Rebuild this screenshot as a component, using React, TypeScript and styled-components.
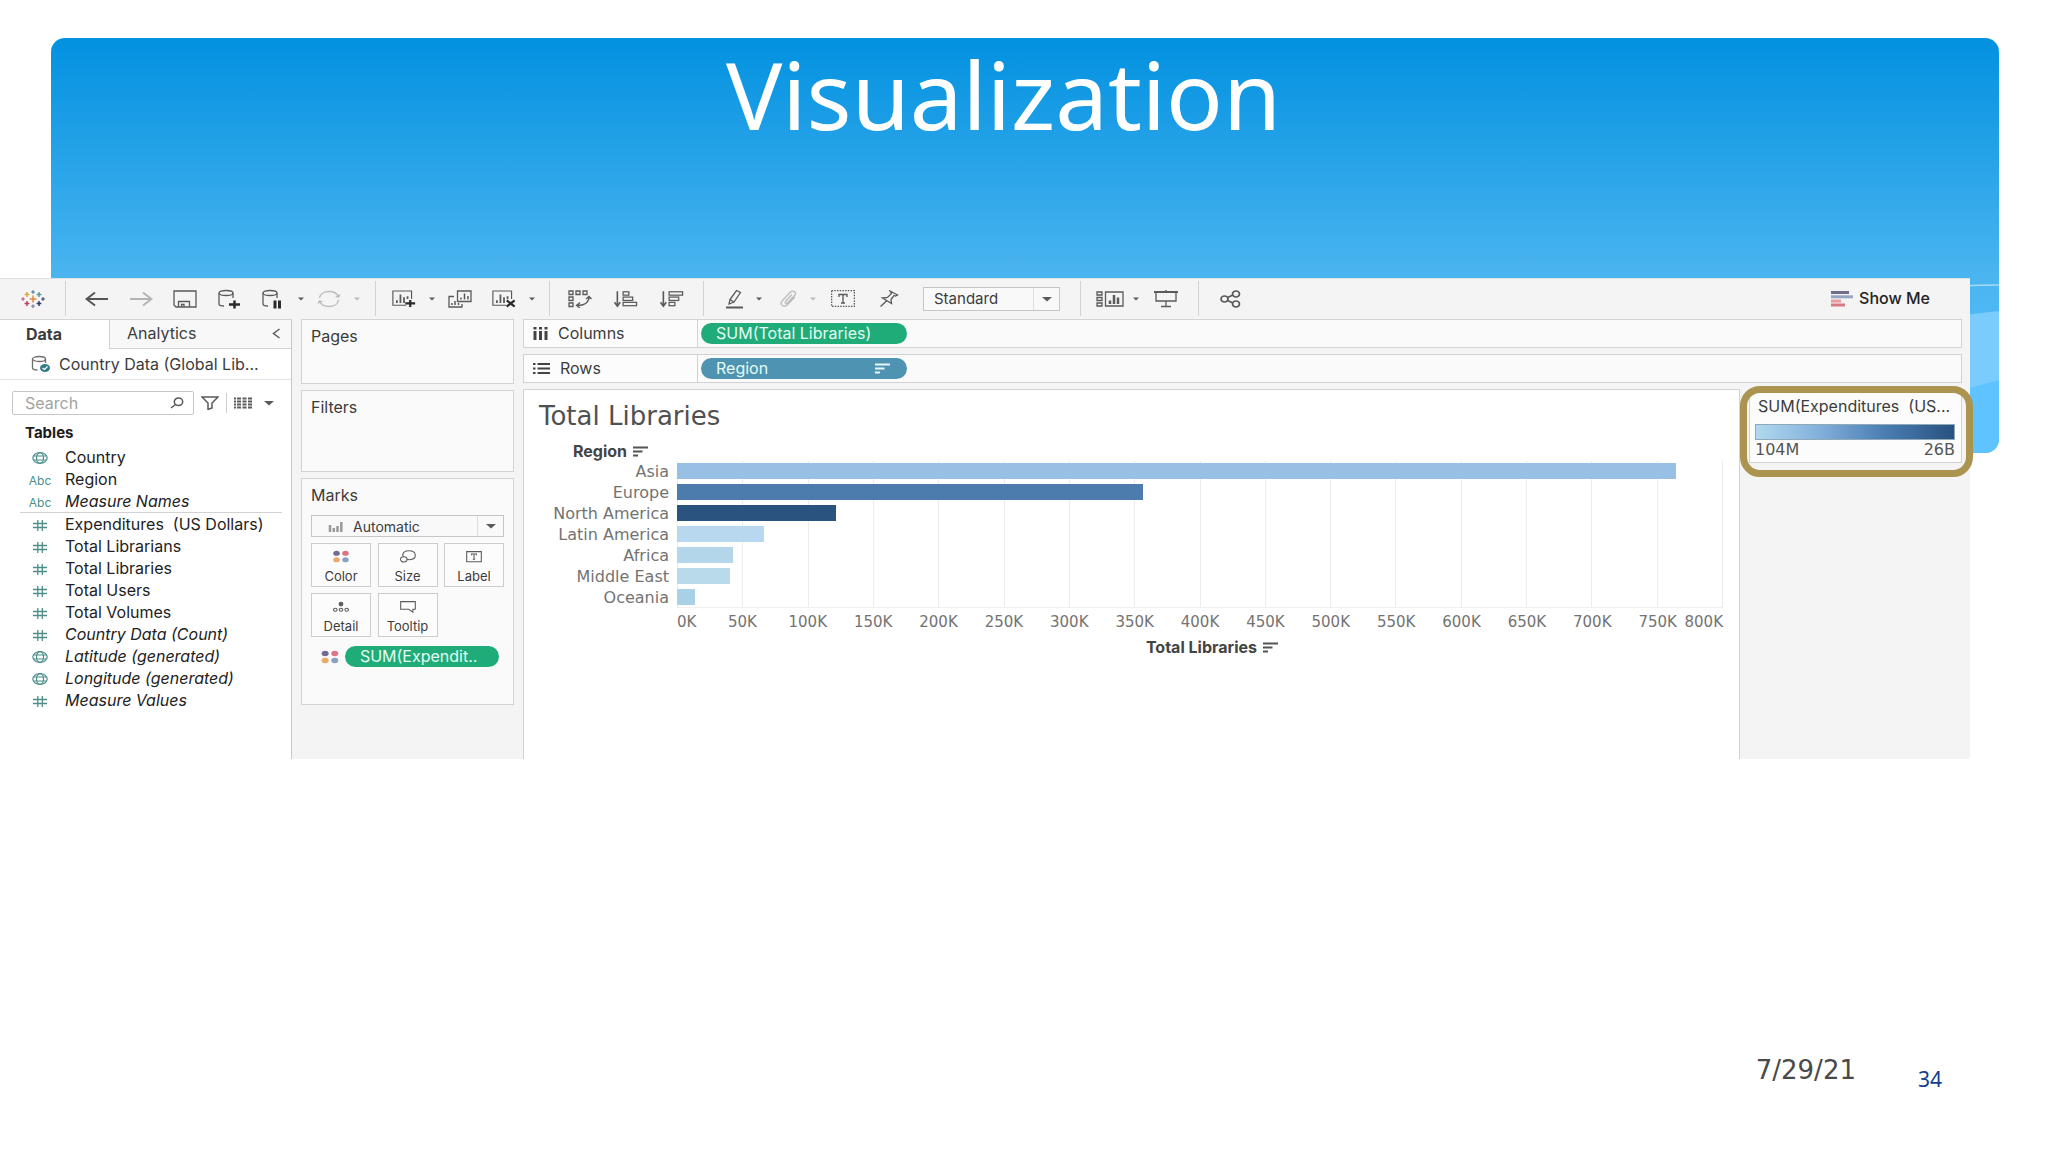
import React from "react";
import styled, { createGlobalStyle } from "styled-components";

const line = "#d2d2d2";
const ink = "#3c3c3c";
const green = "#1fac79";
const teal = "#4b8f8a";

const GlobalStyle = createGlobalStyle`
  *, *::before, *::after { box-sizing: border-box; }
  body { margin: 0; background: #fff; }
  button, input, select { font: inherit; color: inherit; margin: 0; }
`;

const Slide = styled.div`
  min-height: 100vh;
  display: flex;
  flex-direction: column;
  font-family: Inter, "Liberation Sans", sans-serif;
  font-size: 16px;
  color: ${ink};
`;

const Banner = styled.header`
  display: grid;
  margin: 38px 49px 0 51px;
  height: 415px;
  border-radius: 14px;
  background: linear-gradient(#0291e0 0%, #4bb5f0 58%, #50bafa 72%, #5ec3ff 100%);
`;

const Waves = styled.svg`
  grid-area: 1 / 1;
  align-self: end;
  justify-self: end;
  width: 80px;
  height: 175px;
  border-radius: 0 0 14px 0;
`;

const SlideTitle = styled.h1`
  grid-area: 1 / 1;
  margin: 0;
  padding-right: 43px;
  text-align: center;
  font: 400 94px/112px "Noto Sans", "Open Sans", sans-serif;
  color: #fff;
`;

const Workbook = styled.main`
  position: relative;
  margin: -175px 78px 0 0;
  background: #f4f4f4;
`;

const Toolbar = styled.div`
  display: flex;
  height: 41px;
  border-top: 1px solid #dcdfe2;
`;

const ToolGroup = styled.div<{ $left: number; $right: number; $gap?: number }>`
  display: flex;
  align-items: center;
  gap: ${(p) => p.$gap ?? 22}px;
  padding: 0 ${(p) => p.$right}px 0 ${(p) => p.$left}px;
  margin: 2px 0 3px;
  border-right: 1px solid ${line};
  &:last-of-type { border-right: 0; }
`;

const IconButton = styled.button<{ $w?: number }>`
  display: flex;
  align-items: center;
  justify-content: center;
  width: ${(p) => p.$w ?? 24}px;
  height: 24px;
  padding: 0;
  border: 0;
  background: none;
`;

const Split = styled.div<{ $gap?: number }>`
  display: flex;
  align-items: center;
  gap: ${(p) => p.$gap ?? 10}px;
  margin-right: -10px;
`;

const ShowMe = styled.button`
  display: flex;
  align-items: center;
  gap: 5px;
  margin-left: auto;
  padding: 0 40px 2px 0;
  border: 0;
  background: none;
  color: #222;
  font-weight: 500;
`;

const SelectBox = styled.div<{ $w: string; $h: number }>`
  display: grid;
  grid-template-columns: 1fr 25px;
  width: ${(p) => p.$w};
  height: ${(p) => p.$h}px;
  border: 1px solid #c6c6c6;
  background: #f9f9f9;
  & > svg { grid-area: 1 / 2; place-self: center; pointer-events: none; }
`;

const Select = styled.select<{ $pad: number; $size: number }>`
  grid-area: 1 / 1 / 2 / 3;
  min-width: 0;
  appearance: none;
  border: 0;
  padding: 0 26px 0 ${(p) => p.$pad}px;
  font-size: ${(p) => p.$size}px;
  background: linear-gradient(#dedede, #dedede) right 25px top / 1px 100% no-repeat;
`;

const SelectIcon = styled.span`
  grid-area: 1 / 1;
  align-self: center;
  display: flex;
  padding-left: 16px;
  pointer-events: none;
`;

const Body = styled.div`
  display: grid;
  grid-template-columns: 292px 213px minmax(0, 1fr);
  column-gap: 9px;
  min-height: 440px;
`;

const DataPane = styled.aside`
  border-right: 1px solid #c8c8c8;
  border-top: 1px solid ${line};
  background: #fff;
`;

const TabBar = styled.div`
  display: flex;
  height: 29px;
`;

const Tab = styled.button<{ $active?: boolean }>`
  width: ${(p) => (p.$active ? "109px" : "auto")};
  flex: ${(p) => (p.$active ? "none" : 1)};
  display: flex;
  align-items: center;
  justify-content: space-between;
  padding: 0 10px 2px ${(p) => (p.$active ? 26 : 17)}px;
  border: 0;
  border-left: ${(p) => (p.$active ? "0" : `1px solid ${line}`)};
  border-bottom: ${(p) => (p.$active ? "0" : `1px solid ${line}`)};
  background: ${(p) => (p.$active ? "#fff" : "#f8f8f8")};
  font-weight: ${(p) => (p.$active ? 700 : 400)};
`;

const DataSource = styled.div`
  display: flex;
  align-items: center;
  gap: 8px;
  height: 31px;
  padding: 0 10px 1px 31px;
  border-bottom: 1px solid #e6e6e6;
  white-space: nowrap;
`;

const SearchRow = styled.div`
  display: flex;
  align-items: center;
  padding: 11px 0 0 12px;
`;

const SearchBox = styled.label`
  display: flex;
  align-items: center;
  width: 182px;
  height: 24px;
  padding: 0 9px 0 12px;
  margin-right: 6px;
  border: 1px solid #c6c6c6;
  border-radius: 2px;
`;

const SearchInput = styled.input`
  flex: 1;
  min-width: 0;
  padding: 0;
  border: 0;
  outline: 0;
  background: none;
  font-size: 16px;
  &::placeholder { color: #a2a2a2; opacity: 1; }
`;

const Divider = styled.span`
  width: 1px;
  height: 20px;
  margin: 0 6px 0 7px;
  background: #cfcfcf;
`;

const TablesHeading = styled.h2`
  margin: 7px 0 2px 25px;
  font-size: 15px;
  line-height: 22px;
  font-weight: 700;
  color: #1c1c1c;
`;

const FieldList = styled.ul`
  list-style: none;
  margin: 0 9px 0 20px;
  padding: 0;
  & + & { border-top: 1px solid ${line}; }
`;

const Field = styled.li<{ $italic?: boolean }>`
  display: grid;
  grid-template-columns: 40px 1fr;
  align-items: center;
  height: 22px;
  padding-left: 5px;
  font-style: ${(p) => (p.$italic ? "italic" : "normal")};
  color: #222;
  white-space: pre;
`;

const FieldIcon = styled.span`
  display: flex;
  justify-content: center;
  width: 30px;
  padding-top: 2px;
  font-size: 12px;
  font-style: normal;
  color: ${teal};
`;

const Cards = styled.div`
  display: flex;
  flex-direction: column;
`;

const Card = styled.section<{ $h: number }>`
  height: ${(p) => p.$h}px;
  margin-bottom: 6px;
  padding: 3px 9px 0 9px;
  border: 1px solid ${line};
  background: #fafafa;
`;

const CardTitle = styled.h2`
  margin: 0;
  font-size: 16px;
  line-height: 26px;
  font-weight: 400;
`;

const MarkTypeRow = styled.div`
  margin-top: 7px;
`;

const MarkGrid = styled.div`
  display: grid;
  grid-template-columns: repeat(3, 60px);
  justify-content: space-between;
  gap: 6px;
  margin: 6px 0 9px;
`;

const MarkButton = styled.button`
  display: flex;
  flex-direction: column;
  align-items: center;
  gap: 3px;
  height: 44px;
  padding: 6px 0 0;
  border: 1px solid #cdcdcd;
  background: #fcfcfc;
  font-size: 13px;
  line-height: 20px;
`;

const MarkPill = styled.div`
  display: flex;
  align-items: center;
  gap: 6px;
  padding: 0 5px 0 10px;
`;

const Pill = styled.button<{ $color?: string; $w?: string }>`
  display: flex;
  align-items: center;
  justify-content: space-between;
  width: ${(p) => p.$w ?? "206px"};
  height: 21px;
  padding: 0 17px 0 15px;
  border: 0;
  border-radius: 11px;
  background: ${(p) => p.$color ?? green};
  color: #e4fbf3;
  line-height: 21px;
  white-space: nowrap;
`;

const Sheet = styled.div`
  display: flex;
  flex-direction: column;
  min-width: 0;
`;

const Shelf = styled.div`
  display: grid;
  grid-template-columns: 174px 1fr;
  height: 29px;
  margin: 0 8px 6px 0;
  border: 1px solid ${line};
  background: #fafafa;
`;

const ShelfName = styled.div`
  display: flex;
  align-items: center;
  gap: 10px;
  padding: 0 0 1px 9px;
  border-right: 1px solid ${line};
  background: #fcfcfc;
`;

const ShelfDrop = styled.div`
  padding: 3px;
`;

const ViewRow = styled.div`
  flex: 1;
  display: grid;
  grid-template-columns: minmax(0, 1fr) 230px;
`;

const View = styled.section`
  border: 1px solid ${line};
  border-bottom: 0;
  background: #fff;
  padding: 8px 16px 0 15px;
`;

const ViewTitle = styled.h2`
  margin: 0;
  font: 400 26px/36px "DejaVu Sans", "Liberation Sans", sans-serif;
  color: #505050;
`;

const Chart = styled.figure`
  display: grid;
  grid-template-columns: 138px minmax(0, 1fr);
  margin: 7px 0 0;
  font: 400 15px/21px "DejaVu Sans", "Liberation Sans", sans-serif;
  color: #737373;
`;

const ChartHeading = styled.div<{ $axis?: boolean }>`
  display: flex;
  align-items: center;
  gap: 6px;
  grid-column: ${(p) => (p.$axis ? "2" : "1 / -1")};
  justify-content: ${(p) => (p.$axis ? "center" : "flex-start")};
  padding-left: ${(p) => (p.$axis ? 24 : 34)}px;
  height: 20px;
  font: 700 16px/20px Inter, "Liberation Sans", sans-serif;
  color: #444;
`;

const Labels = styled.div`
  padding: 0 8px 0 0;
  text-align: right;
  white-space: nowrap;
  font-size: 16px;
`;

const Plot = styled.div`
  display: grid;
  height: 147px;
`;

const Gridlines = styled.div`
  grid-area: 1 / 1;
  display: flex;
  justify-content: space-between;
  border-bottom: 1px solid #f0f0f0;
  & > i { width: 1px; background: #ececec; }
`;

const Bars = styled.div`
  grid-area: 1 / 1;
  display: flex;
  flex-direction: column;
  gap: 5px;
  padding-top: 2px;
`;

const Bar = styled.div<{ $color: string }>`
  height: 16px;
  background: ${(p) => p.$color};
`;

const Axis = styled.div`
  grid-column: 2;
  display: flex;
  justify-content: space-between;
  padding: 4px 0 4px;
`;

const Tick = styled.span`
  display: flex;
  justify-content: center;
  width: 0;
  &:first-child { justify-content: flex-start; }
  &:last-child { justify-content: flex-end; }
`;

const Legend = styled.section`
  position: relative;
  align-self: start;
  margin: 0 8px 0 9px;
  height: 74px;
  padding: 4px 6px 0 5px;
  border: 1px solid ${line};
  background: #fcfcfc;
`;

const LegendTitle = styled.h2`
  margin: 0 0 6px 3px;
  font-size: 16px;
  line-height: 24px;
  font-weight: 400;
  white-space: pre;
`;

const Ramp = styled.div`
  height: 16px;
  border: 1px solid #8fa9b8;
  background: linear-gradient(90deg, #b2d8ee, #86b3dd 30%, #4b7db3 65%, #28527f);
`;

const LegendRange = styled.div`
  display: flex;
  justify-content: space-between;
  font: 400 16px/20px "DejaVu Sans", "Liberation Sans", sans-serif;
  color: #555;
`;

const Highlight = styled.div`
  position: absolute;
  inset: -4px -12px -15px -10px;
  border: 7px solid #ab9450;
  border-radius: 20px;
  pointer-events: none;
`;

const Footer = styled.footer`
  display: flex;
  justify-content: flex-end;
  align-items: flex-end;
  gap: 62px;
  margin-top: auto;
  padding: 0 106px 57px 0;
`;

const DateText = styled.time`
  font: 400 26px/50px "DejaVu Sans", sans-serif;
  color: #4a4a4a;
`;

const PageNumber = styled.span`
  font: 400 21px/32px "Noto Sans", "Open Sans", sans-serif;
  color: #123f8c;
`;

/* ---------- icons ---------- */

type SvgProps = { w: number; h: number; c?: string; children: React.ReactNode; sw?: number };
const Svg = ({ w, h, c = "#5a5a5a", sw = 1.3, children }: SvgProps) => (
  <svg width={w} height={h} viewBox={`0 0 ${w} ${h}`} fill="none" stroke={c} strokeWidth={sw} aria-hidden="true">
    {children}
  </svg>
);

const Caret = ({ c = "#5a5a5a", big }: { c?: string; big?: boolean }) =>
  big ? (
    <Svg w={10} h={6} c="none"><path d="M0 1h10L5 5.5z" fill={c} /></Svg>
  ) : (
    <Svg w={6} h={4} c="none"><path d="M0 .5h6L3 3.5z" fill={c} /></Svg>
  );

const logoCrosses: [number, number, number, string][] = [
  [12, 9, 3.4, "#e8893a"], [6, 4.5, 2.4, "#d8a93f"], [18, 4.5, 2.4, "#5e9696"],
  [6, 13.5, 2.4, "#b8405c"], [18, 13.5, 2.4, "#2c3d70"], [12, 2, 1.7, "#5f8aa5"],
  [12, 16.2, 1.7, "#8a8aa8"], [2, 9, 1.7, "#b77a86"], [22, 9, 1.7, "#4f5b88"],
];
const LogoIcon = () => (
  <Svg w={24} h={18} sw={1.5}>
    {logoCrosses.map(([x, y, r, c]) => (
      <path key={`${x}-${y}`} d={`M${x - r} ${y}h${2 * r}M${x} ${y - r}v${2 * r}`} stroke={c} />
    ))}
  </Svg>
);

const ArrowIcon = ({ flip, c }: { flip?: boolean; c: string }) => (
  <Svg w={24} h={16} c={c} sw={2}>
    <path d={flip ? "M1 8h21M14 1.5 22.5 8 14 14.5" : "M23 8H2M10 1.5 1.5 8 10 14.5"} />
  </Svg>
);

const SaveIcon = () => (
  <Svg w={24} h={18}>
    <path d="M1 1h22v16H3l-2-2zM5.5 17v-5.5h11V17M8.5 17v-2.5h2.5V17" />
  </Svg>
);

const Cylinder = () => (
  <>
    <ellipse cx="9" cy="4" rx="7" ry="2.5" />
    <path d="M2 4v11c0 1 2 2 5 2M16 4v5" />
  </>
);
const DbAddIcon = () => (
  <Svg w={24} h={20}><Cylinder /><path d="M12 15.5h11M17.5 11.5v8" stroke="#2a2a2a" strokeWidth="2.5" /></Svg>
);
const DbPauseIcon = () => (
  <Svg w={24} h={20}><Cylinder /><path d="M14 11.5v8M18.5 11.5v8" stroke="#2a2a2a" strokeWidth="3" /></Svg>
);
const DbCheckIcon = () => (
  <Svg w={20} h={18} c="#6e6e6e">
    <ellipse cx="8" cy="4" rx="6.5" ry="2.5" />
    <path d="M1.500 4v9c0 1 2 2 5 2M14.5 4v4" />
    <ellipse cx="14" cy="13" rx="5" ry="4" fill="#2f7c88" stroke="none" />
    <path d="M11.5 13l2 1.5 3-3" stroke="#fff" />
  </Svg>
);
const RefreshIcon = () => (
  <Svg w={24} h={18} c="#bcbcbc" sw={1.5}>
    <path d="M2.5 8C3 4 7 1.5 12 1.5c4.5 0 8 2 9.5 5M21.5 10C21 14 17 16.5 12 16.5c-4.5 0-8-2-9.5-5" />
    <path d="M23.5 4l-1.5 4-4-1.5zM.5 14 2 10l4 1.5z" fill="#bcbcbc" stroke="none" />
  </Svg>
);

const ChartBox = () => (
  <>
    <path d="M16 17H1V1h21v9" />
    <path d="M5.5 14.5v-3M9.5 14.5V5M13.5 14.5V8M17.5 10V7" strokeWidth="2" />
  </>
);
const NewSheetIcon = () => (
  <Svg w={27} h={20}><ChartBox /><path d="M15 15h11M20.5 11v8" stroke="#2a2a2a" strokeWidth="2.5" /></Svg>
);
const ClearSheetIcon = () => (
  <Svg w={27} h={20}><ChartBox /><path d="M16.5 11.5l9 7M25.5 11.5l-9 7" stroke="#2a2a2a" strokeWidth="2.5" /></Svg>
);
const DuplicateIcon = () => (
  <Svg w={24} h={18}>
    <path d="M9.5 1H23v10.5H9.5zM6 6.5H1V17h13v-3" />
    <path d="M13 9.5v-2M16.5 9.5v-6M20 9.5V6M4 15v-2M7 15v-4M10.5 15v-2" strokeWidth="1.5" />
  </Svg>
);
const SwapIcon = () => (
  <Svg w={24} h={18}>
    <path d="M1 1h4v3.5H1zM8 1h4v3.5H8zM15 1h4v3.5h-4zM1 7h4v3.5H1zM1 13h4v3.5H1z" />
    <path d="M21 7c0 5-4 8.5-12 8.5M18 9l3-2.5L23.5 9M12 12.5 8.5 15.5l3.5 2.5" />
  </Svg>
);
const SortIcon = ({ desc }: { desc?: boolean }) => {
  const widths = desc ? [14, 10, 6] : [6, 10, 14];
  return (
    <Svg w={25} h={18}>
      <path d="M3.5 1v15M.5 12.5l3 4 3-4" strokeWidth="1.7" />
      {widths.map((w, i) => <rect key={w} x="9.5" y={1.5 + i * 5.5} width={w} height="3.5" />)}
    </Svg>
  );
};
const PencilIcon = () => (
  <Svg w={20} h={20}><path d="M5 10.5 11.5 1.5l4 2L9 13l-5 2zM5 10.5 9 13" /><path d="M1 18.5h17" strokeWidth="2" /></Svg>
);
const ClipIcon = () => (
  <Svg w={20} h={18} c="#bcbcbc">
    <path d="M13 4.5 6.5 11.5c-1 1.5 1 2.5 2 1.5L16 5c2-3-2-5-4.5-3L3 11c-3 4 2 7 5.5 3.5L16 7" />
  </Svg>
);
const TextBoxIcon = () => (
  <Svg w={24} h={17}>
    <rect x=".6" y=".6" width="22.8" height="15.8" strokeDasharray="1.5 1.2" />
    <path d="M8 7V4.5h8V7M12 4.5v8.5M10 13h4" />
  </Svg>
);
const PinIcon = () => (
  <Svg w={20} h={18}><path d="M11 1l7.500 4-2 1-1.500-.5-3 4 .5 4-9-5.500 5-.5 4-4zM7.5 11 1.5 16.5" /></Svg>
);
const ShowCardsIcon = () => (
  <Svg w={28} h={16}>
    <path d="M1 1h5v3H1zM1 6.500h5v3H1zM1 12h5v3H1zM9.5 1H27v14H9.5z" />
    <path d="M14 13V9.5M18 13V4M22 13V6.5" strokeWidth="2.5" />
  </Svg>
);
const PresentIcon = () => (
  <Svg w={24} h={18}><path d="M0 2h24" strokeWidth="2" /><path d="M2 2v9h20V2M12 11v5.5M7 16.5h10M12 0v2" /></Svg>
);
const ShareIcon = () => (
  <Svg w={21} h={18} sw={1.7}>
    <ellipse cx="4.5" cy="9" rx="3.5" ry="3" /><ellipse cx="16" cy="4" rx="3.5" ry="3" /><ellipse cx="16" cy="14" rx="3.5" ry="3" />
    <path d="M7.5 7.5l5.5-2.5M7.5 10.5l5.5 2.5" />
  </Svg>
);
const ShowMeIcon = () => (
  <Svg w={24} h={17} c="none">
    <path d="M1 1h18v3H1z" fill="#716e8c" /><path d="M1 5.300h22v3H1z" fill="#96a5c4" />
    <path d="M1 9.600h10v3H1z" fill="#eb9da2" /><path d="M1 13.5h14v3H1z" fill="#d67b83" />
  </Svg>
);

const CollapseIcon = () => <Svg w={9} h={11} sw={1.5}><path d="M7.5 1 1.5 5.5l6 4.5" /></Svg>;
const MagnifierIcon = () => <Svg w={14} h={12} sw={1.5}><ellipse cx="8.5" cy="4.8" rx="4.2" ry="3.8" /><path d="M5.5 7.5 1 11" /></Svg>;
const FilterIcon = () => <Svg w={18} h={14} sw={1.5}><path d="M1 1h16l-6 6v5l-4 1.5V7z" /></Svg>;
const GridIcon = () => (
  <Svg w={18} h={12}><path d="M0 1.5h18M0 4.5h18M0 7.5h18M0 10.5h18" strokeWidth="1.8" strokeDasharray="2 1 4 1.5 4 1.5 4 0" /></Svg>
);
const GlobeIcon = () => (
  <Svg w={16} h={12} c={teal} sw={1.2}>
    <ellipse cx="8" cy="6" rx="7.2" ry="5.3" /><ellipse cx="8" cy="6" rx="3.5" ry="5.3" /><path d="M1.500 4h13M1.500 8h13" />
  </Svg>
);
const HashIcon = () => <Svg w={14} h={11} c={teal}><path d="M4.800 0v11M9.300 0v11M0 3.500h14M0 7.500h14" /></Svg>;

const FunnelBars = ({ c }: { c: string }) => (
  <Svg w={15} h={11} c={c} sw={2}><path d="M0 1.500h15M0 5.500h9.500M0 9.500h5" /></Svg>
);
const ColumnsIcon = () => (
  <Svg w={15} h={13} c="#444" sw={3}><path d="M2 4v9M7.5 4v9M13 4v9M2 0v2.5M7.5 0v2.5M13 0v2.5" /></Svg>
);
const RowsIcon = () => (
  <Svg w={17} h={11} c="#444" sw={1.8}><path d="M0 1h2.500M4.500 1H17M0 5.500h2.500M4.500 5.500H17M0 10h2.500M4.500 10H17" /></Svg>
);
const MiniBars = () => (
  <Svg w={15} h={11} c="#9a9a9a" sw={2.5}><path d="M2 11V4M5.800 11V7M9.500 11V5M13.300 11V1" /></Svg>
);
const DotsIcon = ({ small }: { small?: boolean }) => (
  <svg width={small ? 18 : 20} height={small ? 14 : 16} viewBox="0 0 20 16" aria-hidden="true">
    <ellipse cx="4.5" cy="4" rx="4" ry="3.2" fill="#716c92" /><ellipse cx="15.5" cy="4" rx="4" ry="3.2" fill="#dc7484" />
    <ellipse cx="4.5" cy="12" rx="4" ry="3.2" fill="#eba866" /><ellipse cx="15.5" cy="12" rx="4" ry="3.2" fill="#8ba0c4" />
  </svg>
);
const SizeIcon = () => (
  <Svg w={20} h={16}>
    <path d="M4 8C2 3 7 1 11 1c10 0 11 10 1 11-1 0-2 0-3.5-.5" /><ellipse cx="4.800" cy="11.5" rx="4" ry="3.3" />
  </Svg>
);
const LabelIcon = () => <Svg w={20} h={16}><path d="M1 2h18v12.500H1zM7 6.500V5h6v1.500M10 5v6.500M8.500 11.500h3" /></Svg>;
const DetailIcon = () => (
  <Svg w={20} h={16}>
    <circle cx="10" cy="5" r="2.3" fill="#5a5a5a" /><ellipse cx="3" cy="12" rx="2.2" ry="1.9" /><ellipse cx="10" cy="12" rx="2.2" ry="1.9" /><ellipse cx="17" cy="12" rx="2.2" ry="1.9" />
  </Svg>
);
const TooltipIcon = () => <Svg w={20} h={16}><path d="M1 2h18v9.500h-3V15l-5-3.500H1z" /></Svg>;

/* ---------- data ---------- */

type FieldRow = { kind: "globe" | "abc" | "hash"; name: string; italic?: boolean };
const dimensions: FieldRow[] = [
  { kind: "globe", name: "Country" },
  { kind: "abc", name: "Region" },
  { kind: "abc", name: "Measure Names", italic: true },
];
const measures: FieldRow[] = [
  { kind: "hash", name: "Expenditures  (US Dollars)" },
  { kind: "hash", name: "Total Librarians" },
  { kind: "hash", name: "Total Libraries" },
  { kind: "hash", name: "Total Users" },
  { kind: "hash", name: "Total Volumes" },
  { kind: "hash", name: "Country Data (Count)", italic: true },
  { kind: "globe", name: "Latitude (generated)", italic: true },
  { kind: "globe", name: "Longitude (generated)", italic: true },
  { kind: "hash", name: "Measure Values", italic: true },
];

const regions = [
  { name: "Asia", value: 764, color: "#98c0e4" },
  { name: "Europe", value: 356.5, color: "#4c7bae" },
  { name: "North America", value: 121.4, color: "#2a547f" },
  { name: "Latin America", value: 66.2, color: "#b7d8ef" },
  { name: "Africa", value: 42.8, color: "#b3d6ea" },
  { name: "Middle East", value: 40.6, color: "#b9daea" },
  { name: "Oceania", value: 13.8, color: "#a8d0e6" },
];
const axisMax = 800;
const ticks = Array.from({ length: 17 }, (_, i) => i * 50);

const marks = [
  { name: "Color", icon: <DotsIcon /> },
  { name: "Size", icon: <SizeIcon /> },
  { name: "Label", icon: <LabelIcon /> },
  { name: "Detail", icon: <DetailIcon /> },
  { name: "Tooltip", icon: <TooltipIcon /> },
];

/* ---------- parts ---------- */

const Tool = ({ label, w, children }: { label: string; w?: number; children: React.ReactNode }) => (
  <IconButton type="button" aria-label={label} $w={w}>{children}</IconButton>
);

const SplitTool = ({ label, w, gap, muted, children }: { label: string; w?: number; gap?: number; muted?: boolean; children: React.ReactNode }) => (
  <Split $gap={gap}>
    <Tool label={label} w={w}>{children}</Tool>
    <Tool label={`${label} options`} w={12}><Caret c={muted ? "#bcbcbc" : undefined} /></Tool>
  </Split>
);

const Fields = ({ rows }: { rows: FieldRow[] }) => (
  <FieldList>
    {rows.map((f) => (
      <Field key={f.name} $italic={f.italic}>
        <FieldIcon>{f.kind === "globe" ? <GlobeIcon /> : f.kind === "hash" ? <HashIcon /> : "Abc"}</FieldIcon>
        {f.name}
      </Field>
    ))}
  </FieldList>
);

const MarkType = () => (
  <MarkTypeRow>
    <SelectBox $w="100%" $h={22}>
      <Select aria-label="Mark type" $pad={41} $size={14}><option>Automatic</option></Select>
      <SelectIcon><MiniBars /></SelectIcon>
      <Caret big />
    </SelectBox>
  </MarkTypeRow>
);

export default function App() {
  return (
    <Slide>
      <GlobalStyle />
      <Banner>
        <Waves viewBox="0 0 80 175" aria-hidden="true">
          <path d="M0 42 80 33V175H0z" fill="#7accfd" />
          <path d="M0 124 80 102V175H0z" fill="#5fc3ff" />
          <path d="M0 10C30 8 60 7 80 7" stroke="#a5dcfb" strokeWidth="1.5" fill="none" />
        </Waves>
        <SlideTitle>Visualization</SlideTitle>
      </Banner>

      <Workbook>
        <Toolbar>
          <ToolGroup $left={21} $right={20}>
            <Tool label="Home"><LogoIcon /></Tool>
          </ToolGroup>
          <ToolGroup $left={19} $right={22} $gap={20}>
            <Tool label="Undo"><ArrowIcon c="#555" /></Tool>
            <Tool label="Redo"><ArrowIcon flip c="#b4b4b4" /></Tool>
            <Tool label="Save"><SaveIcon /></Tool>
            <Tool label="New data source"><DbAddIcon /></Tool>
            <SplitTool label="Pause updates"><DbPauseIcon /></SplitTool>
            <SplitTool label="Refresh" muted><RefreshIcon /></SplitTool>
          </ToolGroup>
          <ToolGroup $left={16} $right={21} $gap={20}>
            <SplitTool label="New worksheet"><NewSheetIcon /></SplitTool>
            <Tool label="Duplicate"><DuplicateIcon /></Tool>
            <SplitTool label="Clear sheet"><ClearSheetIcon /></SplitTool>
          </ToolGroup>
          <ToolGroup $left={18} $right={19}>
            <Tool label="Swap"><SwapIcon /></Tool>
            <Tool label="Sort ascending"><SortIcon /></Tool>
            <Tool label="Sort descending"><SortIcon desc /></Tool>
          </ToolGroup>
          <ToolGroup $left={19} $right={20}>
            <SplitTool label="Highlight" gap={6}><PencilIcon /></SplitTool>
            <SplitTool label="Group" gap={6} muted><ClipIcon /></SplitTool>
            <Tool label="Show labels"><TextBoxIcon /></Tool>
            <Tool label="Pin"><PinIcon /></Tool>
            <SelectBox $w="137px" $h={24}>
              <Select aria-label="Fit" $pad={10} $size={15}><option>Standard</option></Select>
              <Caret big />
            </SelectBox>
          </ToolGroup>
          <ToolGroup $left={15} $right={20}>
            <SplitTool label="Show cards" w={28} gap={6}><ShowCardsIcon /></SplitTool>
            <Tool label="Presentation mode"><PresentIcon /></Tool>
          </ToolGroup>
          <ToolGroup $left={19} $right={0}>
            <Tool label="Share"><ShareIcon /></Tool>
          </ToolGroup>
          <ShowMe type="button"><ShowMeIcon />Show Me</ShowMe>
        </Toolbar>

        <Body>
          <DataPane>
            <TabBar>
              <Tab type="button" $active>Data</Tab>
              <Tab type="button">Analytics<CollapseIcon /></Tab>
            </TabBar>
            <DataSource><DbCheckIcon />Country Data (Global Lib...</DataSource>
            <SearchRow>
              <SearchBox>
                <SearchInput type="text" placeholder="Search" aria-label="Search fields" />
                <MagnifierIcon />
              </SearchBox>
              <IconButton type="button" aria-label="Filter fields" $w={19}><FilterIcon /></IconButton>
              <Divider />
              <IconButton type="button" aria-label="View data" $w={20}><GridIcon /></IconButton>
              <IconButton type="button" aria-label="More" $w={32}><Caret big /></IconButton>
            </SearchRow>
            <TablesHeading>Tables</TablesHeading>
            <Fields rows={dimensions} />
            <Fields rows={measures} />
          </DataPane>

          <Cards>
            <Card $h={65}><CardTitle>Pages</CardTitle></Card>
            <Card $h={82}><CardTitle>Filters</CardTitle></Card>
            <Card $h={227}>
              <CardTitle>Marks</CardTitle>
              <MarkType />
              <MarkGrid>
                {marks.map((m) => (
                  <MarkButton type="button" key={m.name}>{m.icon}{m.name}</MarkButton>
                ))}
              </MarkGrid>
              <MarkPill>
                <DotsIcon small />
                <Pill type="button" $w="155px">SUM(Expendit..</Pill>
              </MarkPill>
            </Card>
          </Cards>

          <Sheet>
            <Shelf>
              <ShelfName><ColumnsIcon />Columns</ShelfName>
              <ShelfDrop><Pill type="button">SUM(Total Libraries)</Pill></ShelfDrop>
            </Shelf>
            <Shelf>
              <ShelfName><RowsIcon />Rows</ShelfName>
              <ShelfDrop><Pill type="button" $color="#4f93b2">Region<FunnelBars c="#e8f6fb" /></Pill></ShelfDrop>
            </Shelf>
            <ViewRow>
              <View>
                <ViewTitle>Total Libraries</ViewTitle>
                <Chart>
                  <ChartHeading>Region<FunnelBars c="#555" /></ChartHeading>
                  <Labels>{regions.map((r) => <div key={r.name}>{r.name}</div>)}</Labels>
                  <Plot>
                    <Gridlines>{ticks.map((t) => <i key={t} />)}</Gridlines>
                    <Bars>
                      {regions.map((r) => (
                        <Bar key={r.name} $color={r.color} style={{ width: `${(r.value / axisMax) * 100}%` }} />
                      ))}
                    </Bars>
                  </Plot>
                  <Axis>{ticks.map((t) => <Tick key={t}>{t}K</Tick>)}</Axis>
                  <ChartHeading $axis>Total Libraries<FunnelBars c="#555" /></ChartHeading>
                </Chart>
              </View>
              <Legend>
                <LegendTitle>SUM(Expenditures  (US...</LegendTitle>
                <Ramp />
                <LegendRange><span>104M</span><span>26B</span></LegendRange>
                <Highlight />
              </Legend>
            </ViewRow>
          </Sheet>
        </Body>
      </Workbook>

      <Footer>
        <DateText>7/29/21</DateText>
        <PageNumber>34</PageNumber>
      </Footer>
    </Slide>
  );
}
